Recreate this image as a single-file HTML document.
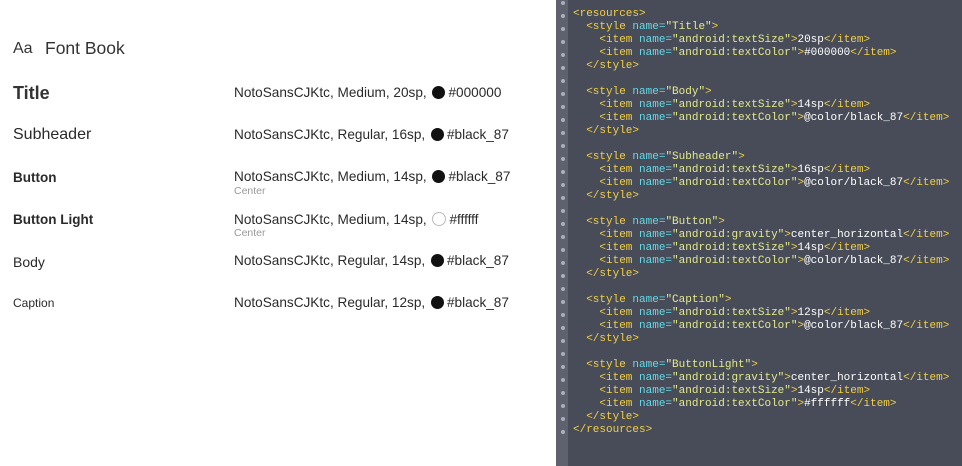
<!DOCTYPE html>
<html><head><meta charset="utf-8"><style>
html,body{margin:0;padding:0}
body{width:962px;height:466px;position:relative;overflow:hidden;background:#fff;font-family:"Liberation Sans",sans-serif;color:#222}
.a{position:absolute;white-space:nowrap;line-height:1}
.l{left:13px;color:#2a2a2a}
.r{left:234px;font-size:13.6px;color:#2a2a2a}
.c{left:234px;font-size:10.5px;color:#999}
.dot{display:inline-block;width:13px;height:13px;border-radius:50%;background:#111;vertical-align:-2px;margin:0 3px 0 2px}
.dot.w{background:#fff;border:1px solid #bbb;width:12px;height:12px}
#code{position:absolute;left:556px;top:0;width:406px;height:466px;background:#474c58}
#gut{position:absolute;left:556px;top:0;width:12px;height:466px;background:#5d626e}
.gd{position:absolute;left:561px;width:4px;height:4px;border-radius:50%;background:#aab0bb}
pre{position:absolute;left:573px;top:8px;margin:0;font-family:"Liberation Mono",monospace;font-size:11px;line-height:13px;color:#fff}
.t{color:#f3cf45}.n{color:#63dbe8}.s{color:#e4ea8a}
</style></head><body>
<div class="a" style="left:13px;top:41px;font-size:16px;color:#333">Aa</div>
<div class="a" style="left:45px;top:40px;font-size:17.5px;color:#333">Font Book</div>
<div class="a l" style="top:84px;font-size:18px;font-weight:bold;color:#333">Title</div>
<div class="a r" style="top:86px">NotoSansCJKtc, Medium, 20sp, <span class="dot"></span>#000000</div>
<div class="a l" style="top:127px;font-size:16px">Subheader</div>
<div class="a r" style="top:128px">NotoSansCJKtc, Regular, 16sp, <span class="dot"></span>#black_87</div>
<div class="a l" style="top:171px;font-size:13.5px;font-weight:bold">Button</div>
<div class="a r" style="top:170px">NotoSansCJKtc, Medium, 14sp, <span class="dot"></span>#black_87</div>
<div class="a c" style="top:186px">Center</div>
<div class="a l" style="top:213px;font-size:13.5px;font-weight:bold">Button Light</div>
<div class="a r" style="top:212px">NotoSansCJKtc, Medium, 14sp, <span class="dot w"></span>#ffffff</div>
<div class="a c" style="top:228px">Center</div>
<div class="a l" style="top:255px;font-size:14px">Body</div>
<div class="a r" style="top:254px">NotoSansCJKtc, Regular, 14sp, <span class="dot"></span>#black_87</div>
<div class="a l" style="top:297px;font-size:12px">Caption</div>
<div class="a r" style="top:296px">NotoSansCJKtc, Regular, 12sp, <span class="dot"></span>#black_87</div>
<div id="code"></div><div id="gut"></div>
<div id="dots"></div>
<script>
var d=document.getElementById('dots'),h='';
for(var i=-1;i<=32;i++){h+='<div class="gd" style="top:'+(8+13*i+6)+'px"></div>';}
d.innerHTML=h;
</script>
<pre><span class="t">&lt;resources&gt;</span>
  <span class="t">&lt;style</span> <span class="n">name=</span><span class="s">"Title"</span><span class="t">&gt;</span>
    <span class="t">&lt;item</span> <span class="n">name=</span><span class="s">"android:textSize"</span><span class="t">&gt;</span>20sp<span class="t">&lt;/item&gt;</span>
    <span class="t">&lt;item</span> <span class="n">name=</span><span class="s">"android:textColor"</span><span class="t">&gt;</span>#000000<span class="t">&lt;/item&gt;</span>
  <span class="t">&lt;/style&gt;</span>

  <span class="t">&lt;style</span> <span class="n">name=</span><span class="s">"Body"</span><span class="t">&gt;</span>
    <span class="t">&lt;item</span> <span class="n">name=</span><span class="s">"android:textSize"</span><span class="t">&gt;</span>14sp<span class="t">&lt;/item&gt;</span>
    <span class="t">&lt;item</span> <span class="n">name=</span><span class="s">"android:textColor"</span><span class="t">&gt;</span>@color/black_87<span class="t">&lt;/item&gt;</span>
  <span class="t">&lt;/style&gt;</span>

  <span class="t">&lt;style</span> <span class="n">name=</span><span class="s">"Subheader"</span><span class="t">&gt;</span>
    <span class="t">&lt;item</span> <span class="n">name=</span><span class="s">"android:textSize"</span><span class="t">&gt;</span>16sp<span class="t">&lt;/item&gt;</span>
    <span class="t">&lt;item</span> <span class="n">name=</span><span class="s">"android:textColor"</span><span class="t">&gt;</span>@color/black_87<span class="t">&lt;/item&gt;</span>
  <span class="t">&lt;/style&gt;</span>

  <span class="t">&lt;style</span> <span class="n">name=</span><span class="s">"Button"</span><span class="t">&gt;</span>
    <span class="t">&lt;item</span> <span class="n">name=</span><span class="s">"android:gravity"</span><span class="t">&gt;</span>center_horizontal<span class="t">&lt;/item&gt;</span>
    <span class="t">&lt;item</span> <span class="n">name=</span><span class="s">"android:textSize"</span><span class="t">&gt;</span>14sp<span class="t">&lt;/item&gt;</span>
    <span class="t">&lt;item</span> <span class="n">name=</span><span class="s">"android:textColor"</span><span class="t">&gt;</span>@color/black_87<span class="t">&lt;/item&gt;</span>
  <span class="t">&lt;/style&gt;</span>

  <span class="t">&lt;style</span> <span class="n">name=</span><span class="s">"Caption"</span><span class="t">&gt;</span>
    <span class="t">&lt;item</span> <span class="n">name=</span><span class="s">"android:textSize"</span><span class="t">&gt;</span>12sp<span class="t">&lt;/item&gt;</span>
    <span class="t">&lt;item</span> <span class="n">name=</span><span class="s">"android:textColor"</span><span class="t">&gt;</span>@color/black_87<span class="t">&lt;/item&gt;</span>
  <span class="t">&lt;/style&gt;</span>

  <span class="t">&lt;style</span> <span class="n">name=</span><span class="s">"ButtonLight"</span><span class="t">&gt;</span>
    <span class="t">&lt;item</span> <span class="n">name=</span><span class="s">"android:gravity"</span><span class="t">&gt;</span>center_horizontal<span class="t">&lt;/item&gt;</span>
    <span class="t">&lt;item</span> <span class="n">name=</span><span class="s">"android:textSize"</span><span class="t">&gt;</span>14sp<span class="t">&lt;/item&gt;</span>
    <span class="t">&lt;item</span> <span class="n">name=</span><span class="s">"android:textColor"</span><span class="t">&gt;</span>#ffffff<span class="t">&lt;/item&gt;</span>
  <span class="t">&lt;/style&gt;</span>
<span class="t">&lt;/resources&gt;</span></pre>
</body></html>
